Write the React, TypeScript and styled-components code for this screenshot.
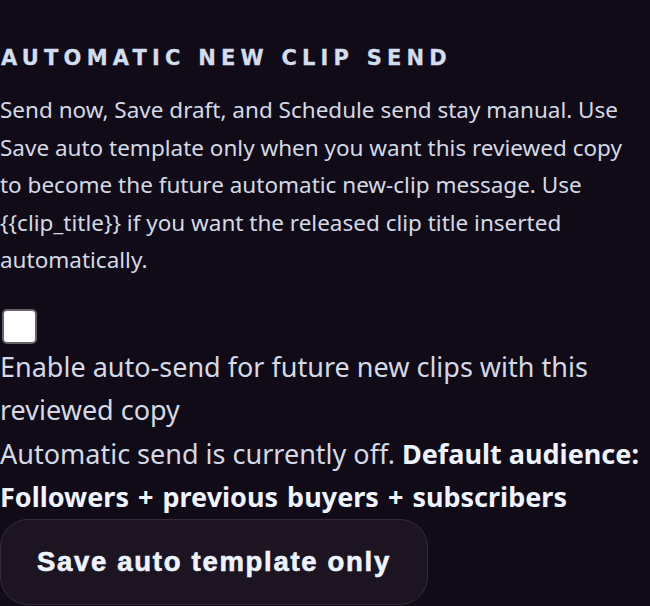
import React from 'react'
import styled, { createGlobalStyle } from 'styled-components'

const GlobalStyle = createGlobalStyle`
  body {
    margin: 0;
    background: #110b18;
    color: #d4d9e7;
    font-family: "Noto Sans", "Open Sans", sans-serif;
  }
`

const Section = styled.section`
  display: flex;
  flex-direction: column;
  align-items: flex-start;
  padding-top: 46px;
  width: 644px;
`

const Eyebrow = styled.h2`
  margin: 0 0 20px 1px;
  font-family: "DejaVu Sans", Verdana, sans-serif;
  font-size: 21px;
  line-height: 25px;
  font-weight: 700;
  letter-spacing: 5.2px;
  text-transform: uppercase;
  color: #d3ddf0;
  -webkit-text-stroke: 0.3px #d3ddf0;
`

const Help = styled.p`
  margin: 0 0 30px;
  font-size: 22.5px;
  line-height: 37.6px;
  color: #d4d9e7;
`

const ToggleLabel = styled.label`
  display: flex;
  flex-direction: column;
  align-items: flex-start;
  font-size: 27px;
  line-height: 43.4px;
  color: #d4d9e7;
  cursor: pointer;
`

const Box = styled.input`
  appearance: none;
  margin: 0 0 1px 2px;
  width: 35px;
  height: 35px;
  box-sizing: border-box;
  background: #ffffff;
  border: 2px solid #66636b;
  border-radius: 5px;
  cursor: pointer;

  &:checked {
    background: #3b82f6;
  }
`

const Status = styled.div`
  font-size: 27px;
  line-height: 43.4px;
  color: #d4d9e7;

  strong {
    font-weight: 700;
    color: #eef3ff;
  }
`

const Audience = styled.span`
  word-spacing: 2px;
`

const SaveButton = styled.button`
  width: 428px;
  height: 86px;
  padding: 0 36px;
  background: #1c1521;
  border: 1.5px solid #3a2939;
  border-radius: 28px;
  color: #eef4ff;
  font-family: "Liberation Sans", Arial, sans-serif;
  font-size: 27.5px;
  font-weight: 700;
  letter-spacing: 1.7px;
  -webkit-text-stroke: 0.6px #eef4ff;
  text-align: left;
  cursor: pointer;
`

export default function App() {
  const [enabled, setEnabled] = React.useState(false)
  return (
    <>
      <GlobalStyle />
      <Section>
        <Eyebrow>Automatic new clip send</Eyebrow>
        <Help>
          Send now, Save draft, and Schedule send stay manual. Use Save auto template only when
          you want this reviewed copy to become the future automatic new-clip message. Use{' '}
          {'{{clip_title}}'} if you want the released clip title inserted automatically.
        </Help>
        <ToggleLabel>
          <Box type="checkbox" checked={enabled} onChange={(e) => setEnabled(e.target.checked)} />
          Enable auto-send for future new clips with this reviewed copy
        </ToggleLabel>
        <Status>
          Automatic send is currently {enabled ? 'on' : 'off'}.{' '}
          <strong>
            Default audience: <Audience>Followers + previous buyers + subscribers</Audience>
          </strong>
        </Status>
        <SaveButton type="button">Save auto template only</SaveButton>
      </Section>
    </>
  )
}
